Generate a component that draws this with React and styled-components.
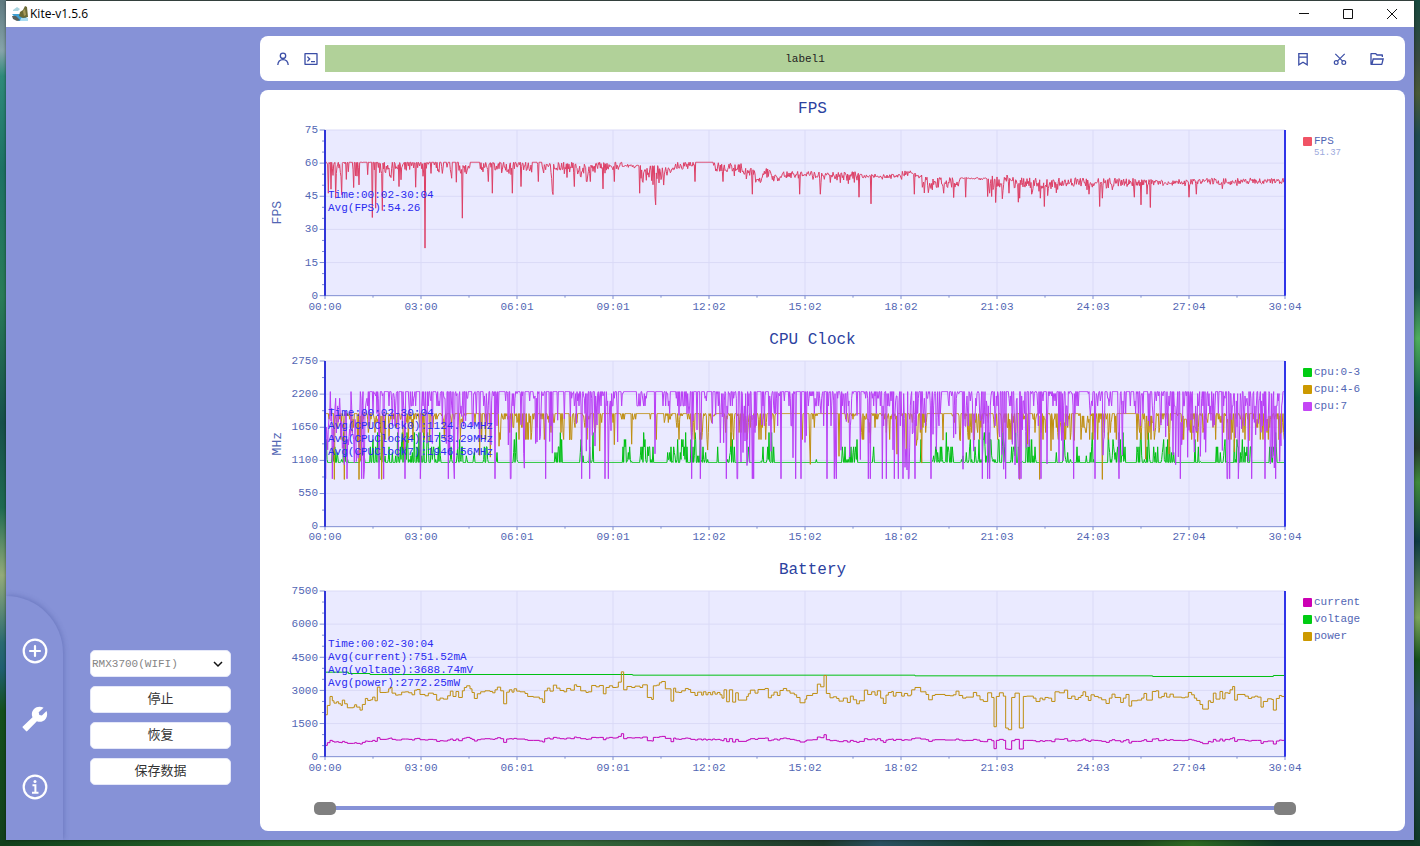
import React from "react";
import styled, { createGlobalStyle } from "styled-components";
import { RiTerminalBoxLine, RiFolderOpenLine } from "react-icons/ri";

const MONO = '"Liberation Mono", "Noto Sans CJK SC", monospace';
const INK = "#5266b4";

const GlobalStyle = createGlobalStyle`
  * {
    box-sizing: border-box;
  }

  body {
    margin: 0;
    font-family: ${MONO};
    font-size: 11px;
  }

  button, select, input {
    font-family: inherit;
  }
`;

// Window ---------------------

const Desktop = styled.div`
  min-height: 100vh;
  display: flex;
  padding: 1px 6px 6px;
  background:
    linear-gradient(#5f7a80 0, #86a4aa 6%, #2f8a7a 9%, #1d7263 20%, #2a7c58 35%, #17504a 50%, #1f6a50 60%, #93ab7a 68%, #2a6a70 76%, #1f5f70 79%, #14501c 84%, #12401c 100%) left / 6px 100% no-repeat,
    linear-gradient(#174a3f 0, #3a4a40 7%, #4a5a38 11%, #1f4a50 16%, #1a5050 34%, #4fae5c 40%, #0e5a44 47%, #26382c 53%, #3f8a3a 57%, #0e3a44 64%, #7ba45a 73%, #14501c 78%, #2a4a5c 84%, #103a28 100%) right / 6px 100% no-repeat,
    linear-gradient(90deg, #12401c 0, #2a6a2c 20%, #35683a 40%, #1f3a2c 58%, #2a5060 62%, #15402c 70%, #1f4a20 80%, #2f6a22 84%, #103a28 90%) bottom / 100% 6px no-repeat,
    #40504c;
`;

const Window = styled.div`
  flex: 1;
  display: flex;
  flex-direction: column;
  background: #8692d7;
  box-shadow: 0 0 3px rgba(0, 0, 0, 0.5);
`;

const TitleBar = styled.header`
  display: flex;
  align-items: center;
  height: 26px;
  padding-left: 6px;
  background: #fff;
`;

const Title = styled.h1`
  flex: 1;
  margin: 0 0 0 2px;
  font: 400 12px/16px "Open Sans", "Noto Sans", sans-serif;
  color: #000;
`;

const WindowButton = styled.button`
  display: flex;
  align-items: center;
  justify-content: center;
  width: 44px;
  height: 26px;
  padding: 0;
  border: 0;
  background: none;
`;

const Body = styled.div`
  flex: 1;
  display: flex;
`;

// Sidebar ---------------------

const Sidebar = styled.aside`
  display: flex;
  align-items: flex-end;
  gap: 27px;
  width: 254px;
`;

const Nav = styled.nav`
  display: flex;
  flex-direction: column;
  align-items: center;
  gap: 42px;
  width: 57px;
  padding: 42px 0 40px;
  border-top-right-radius: 57px;
  box-shadow: 1px -1px 5px rgba(60, 75, 150, 0.35);
  clip-path: inset(-8px -8px 0 0);
`;

const NavButton = styled.button`
  display: flex;
  padding: 0;
  border: 0;
  background: none;
  color: #fff;
`;

const Controls = styled.div`
  display: flex;
  flex-direction: column;
  gap: 9px;
  width: 141px;
  padding-bottom: 55px;
`;

const SelectWrap = styled.div`
  position: relative;
  display: flex;

  svg {
    position: absolute;
    top: 10px;
    right: 8px;
    pointer-events: none;
  }
`;

const DeviceSelect = styled.select`
  appearance: none;
  width: 100%;
  height: 27px;
  padding: 0 1px;
  border: 1px solid #e4e7f8;
  border-radius: 5px;
  background: #fff;
  color: #858585;
  font-size: 11px;
`;

const ActionButton = styled.button`
  height: 27px;
  padding: 0;
  border: 1px solid #e4e7f8;
  border-radius: 5px;
  background: #fff;
  color: #333;
  font-size: 13px;
  line-height: 16px;
`;

// Main column ---------------------

const Main = styled.main`
  flex: 1;
  min-width: 0;
  display: flex;
  flex-direction: column;
  gap: 9px;
  padding: 9px 9px 9px 0;
`;

const Toolbar = styled.div`
  display: flex;
  align-items: center;
  height: 45px;
  border-radius: 8px;
  background: #fff;
`;

const ToolGroup = styled.div`
  display: flex;
  align-items: center;
  gap: ${(p) => p.$gap};
  width: ${(p) => p.$width};
  padding-left: ${(p) => p.$pad};
`;

const ToolButton = styled.button`
  display: flex;
  padding: 0;
  border: 0;
  background: none;
  color: #3b4ea6;
`;

const LabelStrip = styled.div`
  flex: 1;
  height: 27px;
  background: #b1d199;
  color: #222;
  font-size: 11px;
  line-height: 29px;
  text-align: center;
`;

const Panel = styled.section`
  flex: 1;
  display: flex;
  flex-direction: column;
  border-radius: 8px;
  background: #fff;
`;

// Charts ---------------------

const ChartBlock = styled.figure`
  flex: 1;
  display: grid;
  grid-template-columns: 65px 1fr 120px;
  grid-template-rows: 40px minmax(120px, 1fr) 25px;
  margin: 0;
`;

const ChartTitle = styled.figcaption`
  grid-column: 2;
  padding-left: 15px;
  color: #2c429f;
  font-size: 16px;
  line-height: 38px;
  text-align: center;
`;

const YAxis = styled.div`
  grid-column: 1;
  grid-row: 2;
  display: flex;
  align-items: center;
  justify-content: space-between;
  padding: 0 7px 0 10px;
  color: ${INK};
`;

const YName = styled.span`
  writing-mode: vertical-rl;
  transform: rotate(180deg);
  font-size: 13px;
  line-height: 16px;
`;

const YTicks = styled.div`
  display: flex;
  flex-direction: column;
  justify-content: space-between;
  height: 100%;
  margin-left: auto;
`;

const YTick = styled.span`
  display: flex;
  align-items: center;
  justify-content: flex-end;
  height: 0;
`;

const Plot = styled.div`
  grid-column: 2;
  grid-row: 2;
  position: relative;
  min-height: 0;
`;

const PlotSvg = styled.svg`
  position: absolute;
  inset: 0;
  width: 100%;
  height: 100%;
  overflow: visible;

  path, line {
    fill: none;
    vector-effect: non-scaling-stroke;
  }
`;

const Stats = styled.div`
  position: absolute;
  inset: 0;
  display: flex;
  flex-direction: column;
  justify-content: center;
  padding: 0 0 21px 3px;
  color: #2b2bf0;
  line-height: 13px;
`;

const XAxis = styled.div`
  grid-column: 2;
  grid-row: 3;
  display: flex;
  justify-content: space-between;
  padding-top: 4px;
  color: ${INK};
  line-height: 15px;
`;

const XTick = styled.span`
  display: flex;
  justify-content: center;
  width: 0;
`;

const Legend = styled.ul`
  grid-column: 3;
  grid-row: 2;
  margin: 0;
  padding: 3px 0 0 18px;
  list-style: none;
  color: ${INK};
`;

const LegendItem = styled.li`
  display: grid;
  grid-template-columns: 9px auto;
  align-items: center;
  column-gap: 2px;
  line-height: 17px;
`;

const Swatch = styled.i`
  height: 9px;
  border-radius: 1px;
  background: ${(p) => p.$color};
`;

const LegendValue = styled.small`
  grid-column: 2;
  color: #9ba8dc;
  font-size: 9px;
  line-height: 7px;
`;

// Range slider ---------------------

const RangeRow = styled.div`
  display: grid;
  align-items: center;
  height: 49px;
  padding: 3px 109px 0 54px;
`;

const Range = styled.input`
  grid-area: 1 / 1;
  appearance: none;
  width: 100%;
  height: 13px;
  margin: 0;
  background: ${(p) =>
    p.$track ? "linear-gradient(#8692d7, #8692d7) center / calc(100% - 22px) 4px no-repeat" : "none"};
  pointer-events: none;

  &::-webkit-slider-thumb {
    appearance: none;
    width: 22px;
    height: 13px;
    border-radius: 5px;
    background: #808080;
    pointer-events: auto;
  }
`;

// Data ---------------------

const TIMES = ["00:00", "03:00", "06:01", "09:01", "12:02", "15:02", "18:02", "21:03", "24:03", "27:04", "30:04"];

// All traces are kept as x,y pairs on one 2880 x 498 grid
const W = 2880;
const H = 498;

const makeRandom = (seed) => {
  let s = seed;
  return () => {
    s = (s * 1664525 + 1013904223) % 4294967296;
    return s / 4294967296;
  };
};

const toPath = (points) => "M" + points.map(([x, y]) => `${x.toFixed(1)} ${y.toFixed(1)}`).join("L");

const toSteps = (points) => {
  let d = `M${points[0][0]} ${points[0][1]}`;
  points.slice(1).forEach(([x, y]) => {
    d += `H${x}V${y}`;
  });
  return d + `H${W}`;
};

// x end, level, jitter, dip chance, dip depth
const FPS_LEVELS = [
  [60, 97, 8, 0.4, 70], [140, 97, 1, 0.35, 55], [165, 97, 2, 0.1, 30], [240, 107, 12, 0.4, 40],
  [290, 97, 3, 0.35, 28], [310, 100, 3, 0.35, 45], [400, 97, 0, 0.25, 35], [435, 118, 14, 0.2, 15],
  [465, 97, 0, 0, 0], [520, 109, 12, 0.35, 30], [620, 108, 12, 0.2, 20], [650, 97, 0, 0.1, 10],
  [740, 108, 14, 0.3, 35], [810, 118, 20, 0.3, 30], [890, 107, 14, 0.2, 15], [945, 107, 4, 0.1, 10],
  [1020, 130, 26, 0.2, 25], [1045, 122, 16, 0.1, 10], [1110, 107, 13, 0.2, 30], [1165, 97, 0, 0, 0],
  [1250, 112, 15, 0.2, 20], [1290, 126, 14, 0.1, 15], [1310, 152, 8, 0, 0], [1340, 130, 16, 0, 0],
  [1370, 145, 10, 0, 0], [1480, 134, 11, 0.1, 12], [1600, 138, 13, 0.2, 14], [1730, 138, 6, 0.1, 10],
  [1770, 131, 9, 0, 0], [1790, 140, 5, 0, 0], [1905, 158, 17, 0.2, 20],
  [1990, 145, 2, 0.1, 5], [2040, 158, 20, 0.3, 35], [2065, 145, 13, 0, 0], [2200, 160, 17, 0.25, 28],
  [2450, 157, 13, 0.15, 16], [2590, 158, 10, 0.08, 8], [2720, 155, 10, 0.08, 14], [2880, 153, 9, 0.05, 8],
];

const FPS_DIPS = [
  [10, 190], [18, 178], [32, 205], [50, 195], [86, 173], [103, 165], [143, 263], [152, 235], [172, 242],
  [223, 170], [272, 172], [301, 355], [381, 145], [394, 157], [413, 265], [491, 155], [503, 190],
  [562, 190], [588, 170], [640, 155], [682, 185], [685, 194], [748, 170], [797, 155], [834, 177],
  [868, 155], [945, 190], [990, 200], [993, 225], [1111, 155], [1195, 155], [1283, 193], [1425, 193],
  [1487, 193], [1603, 202], [1639, 222], [1768, 193], [1856, 190], [1887, 203], [1922, 202],
  [1988, 200], [1995, 190], [2001, 200], [2012, 218], [2053, 190], [2080, 217], [2085, 205],
  [2120, 193], [2147, 205], [2158, 230], [2293, 193], [2325, 230], [2332, 205], [2428, 202],
  [2449, 225], [2466, 193], [2477, 233], [2593, 202], [2615, 193],
];

const buildFps = () => {
  const rnd = makeRandom(7);
  const points = [];
  for (let x = 0; x <= W; x += 2) {
    const [, level, jitter, chance, depth] = FPS_LEVELS.find((l) => x <= l[0]);
    let y = level + (rnd() - 0.5) * 2 * jitter;
    if (rnd() < chance) y += rnd() * depth;
    const dip = FPS_DIPS.find(([dx]) => dx >= x && dx < x + 2);
    if (dip) y = dip[1];
    points.push([x, Math.max(97, y)]);
  }
  return toPath(points);
};

// cpu traces sit on fixed clock steps, the lists are weighted by repetition
const CLOCKS = {
  little: { rest: 305, steps: [302, 296, 296, 285, 275, 258, 258, 236, 215], seed: 21 },
  big: { rest: 158, steps: [165, 165, 175, 175, 185, 200, 215, 236], seed: 5 },
  prime: { rest: 92, steps: [98, 98, 105, 112, 120, 135, 135, 135, 158, 195], seed: 11 },
};

// x end, activity of each cluster, chance of a prime core drop
const CPU_LEVELS = [
  [105, 0.8, 0.7, 0.95, 0.4], [330, 0.75, 0.75, 0.9, 0.12], [400, 0.5, 0.5, 0.85, 0.3], [530, 0.45, 0.75, 0.6, 0.08],
  [610, 0.3, 0.7, 0.85, 0.18], [680, 0.1, 0.7, 0.7, 0.2], [800, 0.7, 0.45, 0.6, 0.12], [890, 0.1, 0.6, 0.5, 0.08],
  [1060, 0.6, 0.5, 0.5, 0.06], [1230, 0.45, 0.6, 0.8, 0.14], [1290, 0.3, 0.7, 0.95, 0.4],
  [1340, 0.6, 0.6, 0.85, 0.14], [1500, 0.3, 0.4, 0.6, 0.07], [1680, 0.4, 0.75, 0.8, 0.14],
  [1790, 0.3, 0.75, 0.9, 0.34], [1960, 0.7, 0.7, 0.8, 0.12], [2120, 0.6, 0.75, 0.9, 0.3],
  [2260, 0.45, 0.7, 0.6, 0.16], [2480, 0.4, 0.75, 0.75, 0.14], [2560, 0.5, 0.75, 0.75, 0.14],
  [2760, 0.5, 0.6, 0.75, 0.26], [2880, 0.4, 0.8, 0.95, 0.3],
];

const buildClock = (name, column) => {
  const { rest, steps, seed } = CLOCKS[name];
  const rnd = makeRandom(seed);
  const points = [];
  let burst = false;
  for (let x = 0; x <= W; x += 2) {
    const row = CPU_LEVELS.find((l) => x <= l[0]);
    if (rnd() < 0.2) burst = rnd() < row[column];
    let y = rest;
    if (burst && rnd() < 0.6) y = steps[Math.floor(rnd() * steps.length)];
    if (name === "prime") {
      if (x < 105 && rnd() < 0.85) y = 135 + rnd() * 180;
      if (rnd() < row[4]) {
        const r = rnd();
        y = r < 0.25 ? 354 : 150 + r * r * 180;
      }
    }
    if (name === "big" && rnd() < 0.025) y = 236 + rnd() * rnd() * 90;
    points.push([x, y]);
  }
  if (name === "big") {
    [28, 58, 103, 170, 2085, 2145, 2332].forEach((x) => {
      points[Math.floor(x / 2)][1] = 356;
    });
  }
  return toPath(points);
};

const POWER = [
  [0, 372], [7, 344], [15, 317], [22, 330], [27, 337], [35, 333], [41, 339], [48, 344], [52, 328], [59, 339],
  [67, 351], [85, 349], [89, 342], [95, 349], [105, 358], [112, 341], [121, 323], [128, 329], [137, 327],
  [143, 319], [150, 330], [157, 289], [165, 305], [185, 304], [191, 294], [196, 290], [201, 307], [212, 313],
  [220, 312], [230, 304], [241, 303], [251, 306], [261, 312], [269, 298], [276, 296], [285, 311], [300, 315],
  [310, 307], [325, 311], [335, 328], [345, 322], [355, 325], [368, 315], [376, 301], [384, 317], [393, 302],
  [401, 320], [412, 300], [418, 290], [425, 285], [435, 294], [441, 305], [448, 323], [457, 309], [467, 303],
  [480, 300], [495, 302], [503, 306], [510, 297], [517, 289], [527, 300], [536, 339], [545, 304], [553, 297],
  [561, 304], [567, 294], [575, 301], [585, 303], [600, 308], [608, 317], [625, 319], [643, 324], [653, 335],
  [659, 300], [667, 292], [675, 301], [685, 283], [695, 292], [705, 299], [717, 303], [725, 293], [737, 298],
  [748, 282], [755, 287], [767, 300], [783, 305], [790, 303], [800, 284], [813, 288], [823, 284], [835, 309],
  [843, 290], [853, 285], [863, 290], [875, 289], [880, 274], [889, 243], [896, 297], [906, 287], [920, 290],
  [930, 286], [945, 290], [953, 282], [967, 320], [980, 326], [985, 285], [995, 283], [1003, 276], [1010, 272],
  [1021, 294], [1038, 331], [1046, 292], [1052, 304], [1062, 305], [1070, 300], [1081, 293], [1090, 296],
  [1097, 305], [1110, 314], [1118, 304], [1130, 313], [1135, 303], [1143, 312], [1149, 305], [1157, 312],
  [1163, 303], [1170, 310], [1177, 305], [1185, 312], [1191, 322], [1197, 297], [1205, 333], [1213, 297],
  [1223, 334], [1232, 306], [1240, 328], [1265, 317], [1270, 309], [1276, 298], [1290, 307], [1299, 296],
  [1320, 293], [1330, 321], [1339, 313], [1347, 304], [1357, 314], [1365, 299], [1375, 293], [1385, 300],
  [1395, 307], [1408, 312], [1415, 320], [1425, 336], [1440, 325], [1445, 314], [1463, 308], [1477, 280],
  [1487, 288], [1497, 254], [1504, 308], [1515, 321], [1525, 318], [1535, 323], [1542, 331], [1555, 322],
  [1567, 335], [1576, 316], [1585, 327], [1595, 339], [1603, 330], [1618, 298], [1628, 311], [1640, 303],
  [1650, 313], [1657, 300], [1667, 322], [1675, 338], [1683, 313], [1690, 305], [1700, 302], [1705, 316],
  [1713, 305], [1730, 316], [1738, 308], [1748, 315], [1757, 312], [1760, 297], [1770, 290], [1787, 303],
  [1803, 311], [1811, 327], [1822, 314], [1830, 311], [1860, 314], [1875, 315], [1885, 312], [1893, 301],
  [1902, 314], [1913, 322], [1923, 319], [1945, 305], [1955, 315], [1965, 327], [1975, 332], [1988, 306],
  [2000, 320], [2007, 408], [2014, 317], [2023, 306], [2035, 316], [2042, 412], [2050, 417], [2060, 320],
  [2070, 307], [2083, 412], [2095, 317], [2105, 316], [2125, 322], [2133, 332], [2145, 322], [2153, 327],
  [2160, 320], [2170, 322], [2180, 332], [2190, 303], [2203, 306], [2218, 298], [2228, 323], [2240, 316],
  [2250, 326], [2260, 320], [2268, 314], [2274, 303], [2282, 317], [2290, 329], [2298, 312], [2308, 317],
  [2320, 321], [2330, 327], [2343, 338], [2353, 322], [2361, 310], [2370, 320], [2387, 335], [2395, 322],
  [2403, 311], [2412, 346], [2420, 330], [2437, 328], [2450, 322], [2457, 308], [2465, 328], [2482, 302],
  [2493, 300], [2501, 321], [2510, 317], [2518, 307], [2525, 319], [2535, 310], [2545, 319], [2570, 321],
  [2580, 319], [2590, 305], [2600, 312], [2608, 322], [2615, 329], [2625, 341], [2633, 355], [2650, 330],
  [2657, 335], [2665, 307], [2673, 325], [2685, 302], [2693, 324], [2700, 306], [2710, 308], [2715, 297],
  [2723, 287], [2729, 328], [2737, 311], [2760, 316], [2770, 323], [2780, 319], [2790, 316], [2798, 319],
  [2808, 349], [2815, 332], [2828, 324], [2840, 326], [2845, 358], [2854, 323], [2863, 314], [2870, 317],
];

const CURRENT = POWER.map(([x, y]) => [x, Math.round(H - (H - y) / 3.69)]);

const VOLTAGE = [[0, 244], [70, 248], [135, 251], [923, 253], [1770, 255], [2483, 257], [2845, 254]];

const RED = "#dd3f66";
const GREEN = "#00c013";
const GOLD = "#bf8e10";

const CHARTS = [
  {
    title: "FPS",
    unit: "FPS",
    yTicks: ["75", "60", "45", "30", "15", "0"],
    minor: 3,
    stats: ["Time:00:02-30:04", "Avg(FPS):54.26"],
    legend: [{ name: "FPS", color: "#f05365", value: "51.37" }],
    series: [{ color: RED, d: buildFps() }],
  },
  {
    title: "CPU Clock",
    unit: "MHz",
    yTicks: ["2750", "2200", "1650", "1100", "550", "0"],
    minor: 2,
    stats: [
      "Time:00:02-30:04",
      "Avg(CPUClock0):1124.04MHz",
      "Avg(CPUClock4):1753.29MHz",
      "Avg(CPUClock7):1946.56MHz",
    ],
    legend: [
      { name: "cpu:0-3", color: "#00cc13" },
      { name: "cpu:4-6", color: "#cc9900" },
      { name: "cpu:7", color: "#c446f5" },
    ],
    series: [
      { color: GREEN, d: buildClock("little", 1) },
      { color: GOLD, d: buildClock("big", 2) },
      { color: "#b83ef5", d: buildClock("prime", 3) },
    ],
  },
  {
    title: "Battery",
    yTicks: ["7500", "6000", "4500", "3000", "1500", "0"],
    minor: 3,
    stats: ["Time:00:02-30:04", "Avg(current):751.52mA", "Avg(voltage):3688.74mV", "Avg(power):2772.25mW"],
    legend: [
      { name: "current", color: "#cc00b3" },
      { name: "voltage", color: "#00cc13" },
      { name: "power", color: "#cc9900" },
    ],
    series: [
      { color: "#c200b8", d: toSteps(CURRENT) },
      { color: GREEN, d: toSteps(VOLTAGE) },
      { color: GOLD, d: toSteps(POWER) },
    ],
  },
];

// Icons ---------------------

const AppIcon = () => (
  <svg width="16" height="16" viewBox="0 0 16 16" aria-hidden="true">
    <path d="M1 4l4-3 3 2-2 2H1z" fill="#a9d4de" />
    <path d="M0 8h9l6 4v3H6z" fill="#3f9fd2" />
    <path d="M7 10l1-4 3-2 2-4 2 1 1 10-5 1z" fill="#6b6a35" />
    <path d="M11 5l2-2 1 6-2 1z" fill="#a79a58" />
    <path d="M0 10l4 0 4 4-3 1-4-2z" fill="#58605c" />
    <path d="M9 12l7 0v3H8z" fill="#a8dcf2" />
  </svg>
);

const UserIcon = () => (
  <svg width="16" height="16" viewBox="0 0 16 16" fill="none" stroke="currentColor" strokeWidth="1.3">
    <circle cx="8" cy="4.8" r="2.700" />
    <path d="M2.800 14c.2-3.300 2.300-5.400 5.200-5.400s5 2.100 5.200 5.400" />
  </svg>
);

const BookmarkIcon = () => (
  <svg width="16" height="16" viewBox="0 0 16 16" fill="none" stroke="currentColor" strokeWidth="1.3">
    <path d="M3.800 2.600h8.400v11.200L8 11.300l-4.200 2.500zM3.800 6.200h8.400" />
  </svg>
);

const CutIcon = () => (
  <svg width="16" height="16" viewBox="0 0 16 16" fill="none" stroke="currentColor" strokeWidth="1.2">
    <circle cx="4.200" cy="11.600" r="1.900" />
    <circle cx="11.800" cy="11.600" r="1.900" />
    <path d="M3.300 2.800l7.300 7.400M12.700 2.800L5.400 10.200" />
  </svg>
);

const PlusCircle = () => (
  <svg width="26" height="26" viewBox="0 0 26 26" fill="none" stroke="currentColor" strokeWidth="2.2" strokeLinecap="round">
    <circle cx="13" cy="13" r="11.3" />
    <path d="M13 8v10M8 13h10" />
  </svg>
);

const Wrench = () => (
  <svg width="26" height="26" viewBox="0 0 26 26" fill="currentColor">
    <path d="M21.6 1.8l-4.9 4.5.6 2.7 2.6.5 4.6-4.4c1.7 4-.1 8.600-3.900 10.200-2 .8-4 .7-5.700-.1L5.300 25.100c-.4.4-.9.4-1.300 0L.8 21.700c-.4-.4-.4-.9 0-1.300L10.500 11.300C9.300 8.600 9.700 5.300 12 3c2.600-2.600 6.400-3 9.600-1.200z" />
  </svg>
);

const InfoCircle = () => (
  <svg width="26" height="26" viewBox="0 0 26 26" fill="none" stroke="currentColor" strokeWidth="2.2">
    <circle cx="13" cy="13" r="11.3" />
    <path d="M10.500 11.200H13.400V18.500M10 18.800h6.500" strokeWidth="2" />
    <circle cx="13" cy="7.400" r="1.500" fill="currentColor" stroke="none" />
  </svg>
);

// Components ---------------------

const GRID = "#dadaf7";
const AXIS = "#7f8ed2";

function Chart({ title, unit, yTicks, minor, stats, legend, series }) {
  const minorCount = (yTicks.length - 1) * minor;
  return (
    <ChartBlock>
      <ChartTitle>{title}</ChartTitle>
      <YAxis>
        {unit && <YName>{unit}</YName>}
        <YTicks>
          {yTicks.map((t) => (
            <YTick key={t}>{t}</YTick>
          ))}
        </YTicks>
      </YAxis>
      <Plot>
        <PlotSvg viewBox={`0 0 ${W} ${H}`} preserveAspectRatio="none" role="img" aria-label={title}>
          <rect width={W} height={H} fill="#eaeaff" />
          <g shapeRendering="crispEdges">
            {TIMES.map((t, i) => (
              <line key={t} x1={i * 288} x2={i * 288} y1="0" y2={H} stroke={GRID} />
            ))}
            {yTicks.slice(0, -1).map((t, i) => (
              <line key={t} x1="0" x2={W} y1={(i * H) / 5} y2={(i * H) / 5} stroke={GRID} />
            ))}
            {Array.from({ length: minorCount + 1 }, (_, i) => {
              const y = (i * H) / minorCount;
              return <line key={i} x1={i % minor ? -9 : -16} x2="0" y1={y} y2={y} stroke={AXIS} />;
            })}
            {Array.from({ length: 21 }, (_, i) => (
              <line key={i} x1={i * 144} x2={i * 144} y1={H} y2={H + (i % 2 ? 6 : 10)} stroke={AXIS} />
            ))}
            <line x1="0" x2={W} y1={H} y2={H} stroke={AXIS} />
          </g>
          {series.map((s) => (
            <path key={s.color} d={s.d} stroke={s.color} strokeLinejoin="bevel" />
          ))}
          <line x1="0" x2="0" y1="0" y2={H} stroke="#3035d8" strokeWidth="2" />
          <line x1={W} x2={W} y1="0" y2={H} stroke="#3035e8" strokeWidth="2" />
        </PlotSvg>
        <Stats>
          {stats.map((s) => (
            <span key={s}>{s}</span>
          ))}
        </Stats>
      </Plot>
      <Legend>
        {legend.map((l) => (
          <LegendItem key={l.name}>
            <Swatch $color={l.color} />
            <span>{l.name}</span>
            {l.value && <LegendValue>{l.value}</LegendValue>}
          </LegendItem>
        ))}
      </Legend>
      <XAxis>
        {TIMES.map((t) => (
          <XTick key={t}>{t}</XTick>
        ))}
      </XAxis>
    </ChartBlock>
  );
}

export default function App() {
  return (
    <Desktop>
      <GlobalStyle />
      <Window>
        <TitleBar>
          <AppIcon />
          <Title>Kite-v1.5.6</Title>
          <WindowButton aria-label="Minimize">
            <svg width="10" height="10" stroke="#111">
              <path d="M0 4.500h10" />
            </svg>
          </WindowButton>
          <WindowButton aria-label="Maximize">
            <svg width="10" height="10" fill="none" stroke="#111">
              <path d="M.5.5h9v9h-9z" />
            </svg>
          </WindowButton>
          <WindowButton aria-label="Close">
            <svg width="10" height="10" stroke="#111">
              <path d="M0 0l10 10M10 0L0 10" />
            </svg>
          </WindowButton>
        </TitleBar>
        <Body>
          <Sidebar>
            <Nav>
              <NavButton aria-label="Add">
                <PlusCircle />
              </NavButton>
              <NavButton aria-label="Tools">
                <Wrench />
              </NavButton>
              <NavButton aria-label="Info">
                <InfoCircle />
              </NavButton>
            </Nav>
            <Controls>
              <SelectWrap>
                <DeviceSelect aria-label="Device">
                  <option>RMX3700(WIFI)</option>
                </DeviceSelect>
                <svg width="10" height="8" fill="none" stroke="#111" strokeWidth="1.500">
                  <path d="M1 2l4 4 4-4" />
                </svg>
              </SelectWrap>
              <ActionButton>停止</ActionButton>
              <ActionButton>恢复</ActionButton>
              <ActionButton>保存数据</ActionButton>
            </Controls>
          </Sidebar>
          <Main>
            <Toolbar>
              <ToolGroup $width="65px" $pad="15px" $gap="12px">
                <ToolButton aria-label="User">
                  <UserIcon />
                </ToolButton>
                <ToolButton aria-label="Terminal">
                  <RiTerminalBoxLine size={16} />
                </ToolButton>
              </ToolGroup>
              <LabelStrip>label1</LabelStrip>
              <ToolGroup $width="120px" $pad="10px" $gap="21px">
                <ToolButton aria-label="Bookmark">
                  <BookmarkIcon />
                </ToolButton>
                <ToolButton aria-label="Cut">
                  <CutIcon />
                </ToolButton>
                <ToolButton aria-label="Open folder">
                  <RiFolderOpenLine size={16} />
                </ToolButton>
              </ToolGroup>
            </Toolbar>
            <Panel>
              {CHARTS.map((c) => (
                <Chart key={c.title} {...c} />
              ))}
              <RangeRow>
                <Range $track type="range" min="0" max="1804" defaultValue="0" aria-label="Range start" />
                <Range type="range" min="0" max="1804" defaultValue="1804" aria-label="Range end" />
              </RangeRow>
            </Panel>
          </Main>
        </Body>
      </Window>
    </Desktop>
  );
}
